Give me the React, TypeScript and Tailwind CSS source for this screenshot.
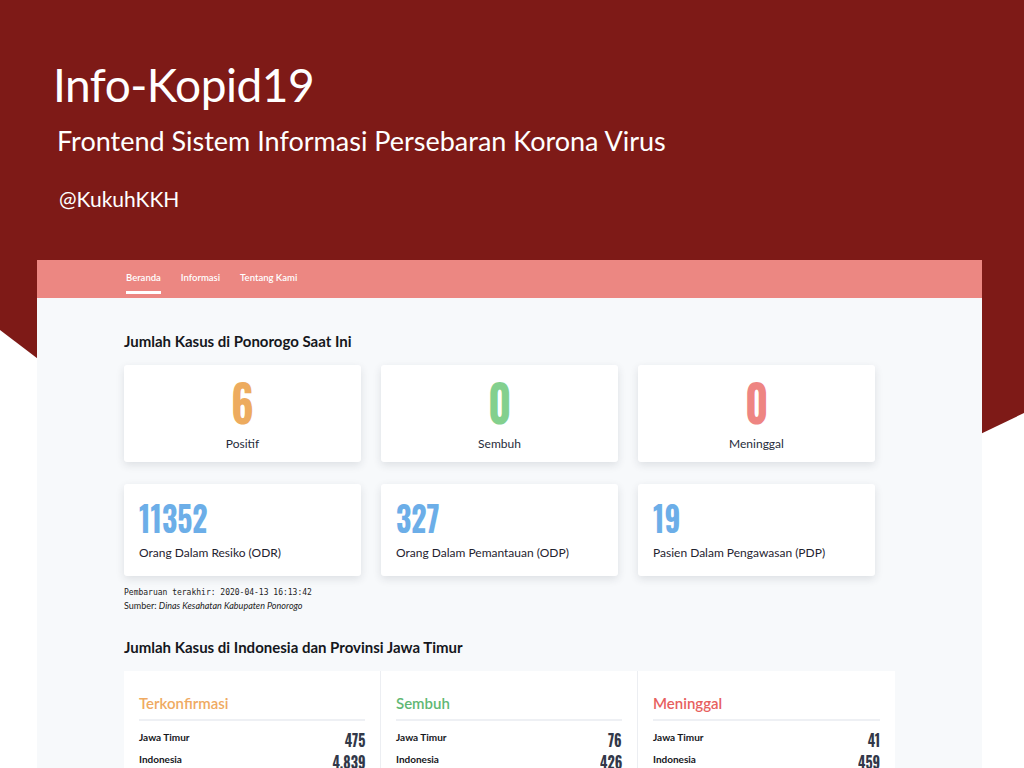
const numFont = "font-['Oswald','Liberation_Sans_Narrow','DejaVu_Sans_Condensed',sans-serif]";

function TopCard({ value, label, color }: { value: string; label: string; color: string }) {
  return (
    <div className="pr-5">
      <div className="flex h-[97px] flex-col items-center rounded-[3px] bg-white pt-[15px] shadow-[0_3px_8px_rgba(30,40,60,0.12)]">
        <span className={`${numFont} text-[50px] leading-[42px] font-bold ${color} inline-block scale-x-[0.85]`}>{value}</span>
        <span className="mt-[14px] text-[12px] leading-4 text-[#262b3a]">{label}</span>
      </div>
    </div>
  );
}

function StatCard({ value, label }: { value: string; label: string }) {
  return (
    <div className="pr-5">
      <div className="h-[92px] rounded-[3px] bg-white px-[15px] pt-[16px] shadow-[0_3px_8px_rgba(30,40,60,0.12)]">
        <span className={`${numFont} inline-block origin-left scale-x-[0.85] text-[35px] leading-[34px] font-bold text-[#6caee8]`}>{value}</span>
        <p className="mt-[6px] text-[12px] leading-4 text-[#1f2330]">{label}</p>
      </div>
    </div>
  );
}

function Row({ label, value, className }: { label: string; value: string; className: string }) {
  return (
    <div className={`flex h-5 items-center justify-between ${className}`}>
      <span className="text-[10px] leading-4 font-bold text-[#15171c]">{label}</span>
      <span className={`${numFont} inline-block origin-right scale-x-[0.88] pt-[5px] text-[16px] leading-[12px] font-bold text-[#323849]`}>{value}</span>
    </div>
  );
}

function RegionCol({ title, color, jatim, indo, last }: { title: string; color: string; jatim: string; indo: string; last?: boolean }) {
  return (
    <div className={`px-[15px] pt-[22px] ${last ? '' : 'border-r border-[#eceef2]'}`}>
      <h3 className={`border-b-2 border-[#eef0f4] pb-[6px] text-[15px] leading-5 font-semibold ${color}`}>{title}</h3>
      <Row label="Jawa Timur" value={jatim} className="mt-[6px]" />
      <Row label="Indonesia" value={indo} className="mt-[2px]" />
    </div>
  );
}

export default function App() {
  return (
    <div className="relative h-[768px] w-[1024px] overflow-hidden bg-white font-['Lato',sans-serif]">
      <svg className="absolute inset-0" width="1024" height="768" viewBox="0 0 1024 768">
        <polygon points="0,0 1024,0 1024,413 463,682 0,330" fill="#7e1a17" />
      </svg>

      <div className="relative">
        <header className="pl-[53px] pt-[58px] text-white">
          <h1 className="text-[46px] leading-[54px] font-normal tracking-[-0.5px]">Info-Kopid19</h1>
          <p className="mt-[14px] pl-[4px] text-[27px] leading-[30px]">Frontend Sistem Informasi Persebaran Korona Virus</p>
          <p className="mt-[31px] pl-[6px] text-[21px] leading-6">@KukuhKKH</p>
        </header>

        <main className="mt-[49px] ml-[37px] w-[945px] bg-[#f7f9fb]">
          <nav className="flex h-[38px] items-start gap-5 bg-[#ec8782] pl-[89px]">
            <a className="flex h-[34px] items-center border-b-[3px] border-white pt-[5px] text-[9.5px] font-semibold text-white">Beranda</a>
            <a className="flex h-[34px] items-center border-b-[3px] border-transparent pt-[5px] text-[9.5px] font-semibold text-white">Informasi</a>
            <a className="flex h-[34px] items-center border-b-[3px] border-transparent pt-[5px] text-[9.5px] font-semibold text-white">Tentang Kami</a>
          </nav>

          <div className="mx-auto w-[771px] pt-[33px]">
            <h2 className="text-[15px] leading-5 font-bold text-[#15171c]">Jumlah Kasus di Ponorogo Saat Ini</h2>
            <div className="mt-[14px] grid grid-cols-3">
              <TopCard value="6" label="Positif" color="text-[#edab5e]" />
              <TopCard value="0" label="Sembuh" color="text-[#83d08e]" />
              <TopCard value="0" label="Meninggal" color="text-[#ee8582]" />
            </div>
            <div className="mt-[22px] grid grid-cols-3">
              <StatCard value="11352" label="Orang Dalam Resiko (ODR)" />
              <StatCard value="327" label="Orang Dalam Pemantauan (ODP)" />
              <StatCard value="19" label="Pasien Dalam Pengawasan (PDP)" />
            </div>
            <p className="mt-[10px] font-['DejaVu_Sans_Mono',monospace] text-[8px] leading-[13px] text-[#222]">Pembaruan terakhir: 2020-04-13 16:13:42</p>
            <p className="text-[9px] leading-[14px] text-[#222]">
              Sumber: <i>Dinas Kesahatan Kabupaten Ponorogo</i>
            </p>

            <h2 className="mt-[24px] text-[15px] leading-5 font-bold text-[#15171c]">Jumlah Kasus di Indonesia dan Provinsi Jawa Timur</h2>
            <div className="mt-[14px] grid h-[120px] grid-cols-3 bg-white">
              <RegionCol title="Terkonfirmasi" color="text-[#efaa62]" jatim="475" indo="4.839" />
              <RegionCol title="Sembuh" color="text-[#5fb874]" jatim="76" indo="426" />
              <RegionCol title="Meninggal" color="text-[#e7605e]" jatim="41" indo="459" last />
            </div>
          </div>
        </main>
      </div>
    </div>
  );
}
